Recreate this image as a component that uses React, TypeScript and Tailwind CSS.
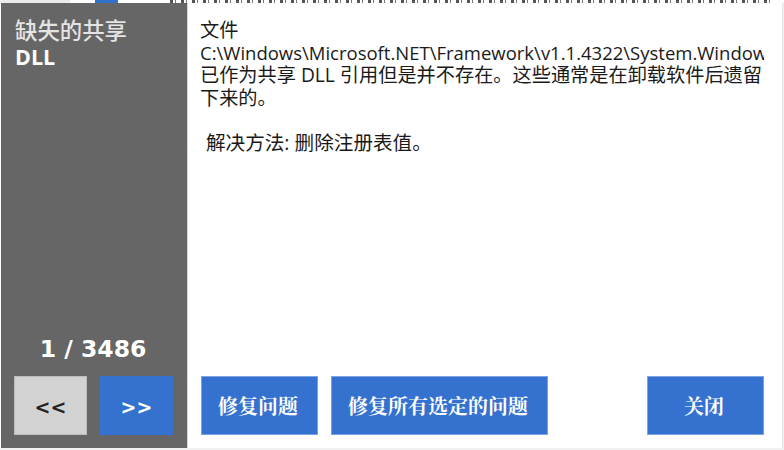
function ActionButton({ label, width }: { label: string; width: string }) {
  return (
    <button
      className={`h-[59px] ${width} pt-[3px] pr-[3px] bg-[#3572cf] border border-[#7aa3e0] text-white text-[20px] font-['DejaVu_Serif','Noto_Serif_CJK_SC','Noto_Sans_CJK_SC',serif] font-bold`}
    >
      {label}
    </button>
  );
}

export default function App() {
  return (
    <div className="w-[784px] h-[450px] flex flex-col overflow-hidden bg-[#f0f0f0] font-['Open_Sans','Noto_Sans_CJK_SC',sans-serif]">
      {/* sliver of the window behind the dialog */}
      <div className="h-[3px] shrink-0 flex bg-white">
        <div className="w-[70px] bg-[#ececec]" />
        <div className="ml-[25px] w-[23px] bg-[#2f74c8]" />
        <div className="ml-[52px] w-[600px] h-[3px] bg-[repeating-linear-gradient(90deg,#555555_0,#555555_3px,transparent_3px,transparent_5px,#777777_5px,#777777_6px,transparent_6px,transparent_11px)]" />
      </div>
      <div className="h-[445px] w-[783px] flex border-r border-[#e6e6e6] bg-white pl-px">
        <aside className="w-[186px] shrink-0 bg-[#666666] flex flex-col pl-[13px] pr-[13px] pt-[15px] pb-[13px]">
          <div className="pl-px text-[22.4px] leading-[26px] font-medium text-[#e4e4e4] font-['DejaVu_Serif','Noto_Sans_CJK_SC',serif]">
            缺失的共享
            <div className="text-[21.5px] font-bold text-white font-['Open_Sans',sans-serif]">DLL</div>
          </div>
          <div className="mt-auto mb-[14px] pr-[2px] text-center text-[23.5px] leading-[26px] font-bold text-white font-['DejaVu_Sans',sans-serif]">
            1 / 3486
          </div>
          <div className="flex gap-[13px]">
            <button className="w-[73px] h-[59px] pt-[3px] bg-[#d2d2d2] border border-[#bdbdbd] text-[#222222] text-[19px] font-bold font-['DejaVu_Sans',sans-serif]">
              &lt;&lt;
            </button>
            <button className="w-[73px] h-[59px] pt-[3px] bg-[#3572cf] text-white text-[19px] font-bold font-['DejaVu_Sans',sans-serif]">
              &gt;&gt;
            </button>
          </div>
        </aside>
        <main className="flex-1 min-w-0 flex flex-col border-l border-[#d8d8d8] pl-[13px] pr-[18px] pt-[16px] pb-[13px]">
          <div className="-ml-px text-[19.2px] leading-[22.5px] text-[#1a1a1a]">
            <div>文件</div>
            <div className="whitespace-nowrap overflow-hidden text-[18.5px]">C:\Windows\Microsoft.NET\Framework\v1.1.4322\System.Windows.Forms.dll</div>
            <div>已作为共享 DLL 引用但是并不存在。这些通常是在卸载软件后遗留下来的。</div>
            <div className="h-[22.5px]" />
            <div className="pl-[6px] text-[19.6px]">解决方法: 删除注册表值。</div>
          </div>
          <div className="mt-auto flex gap-[13px]">
            <ActionButton label="修复问题" width="w-[117px]" />
            <ActionButton label="修复所有选定的问题" width="w-[217px]" />
            <div className="ml-auto">
              <ActionButton label="关闭" width="w-[117px]" />
            </div>
          </div>
        </main>
      </div>
    </div>
  );
}
